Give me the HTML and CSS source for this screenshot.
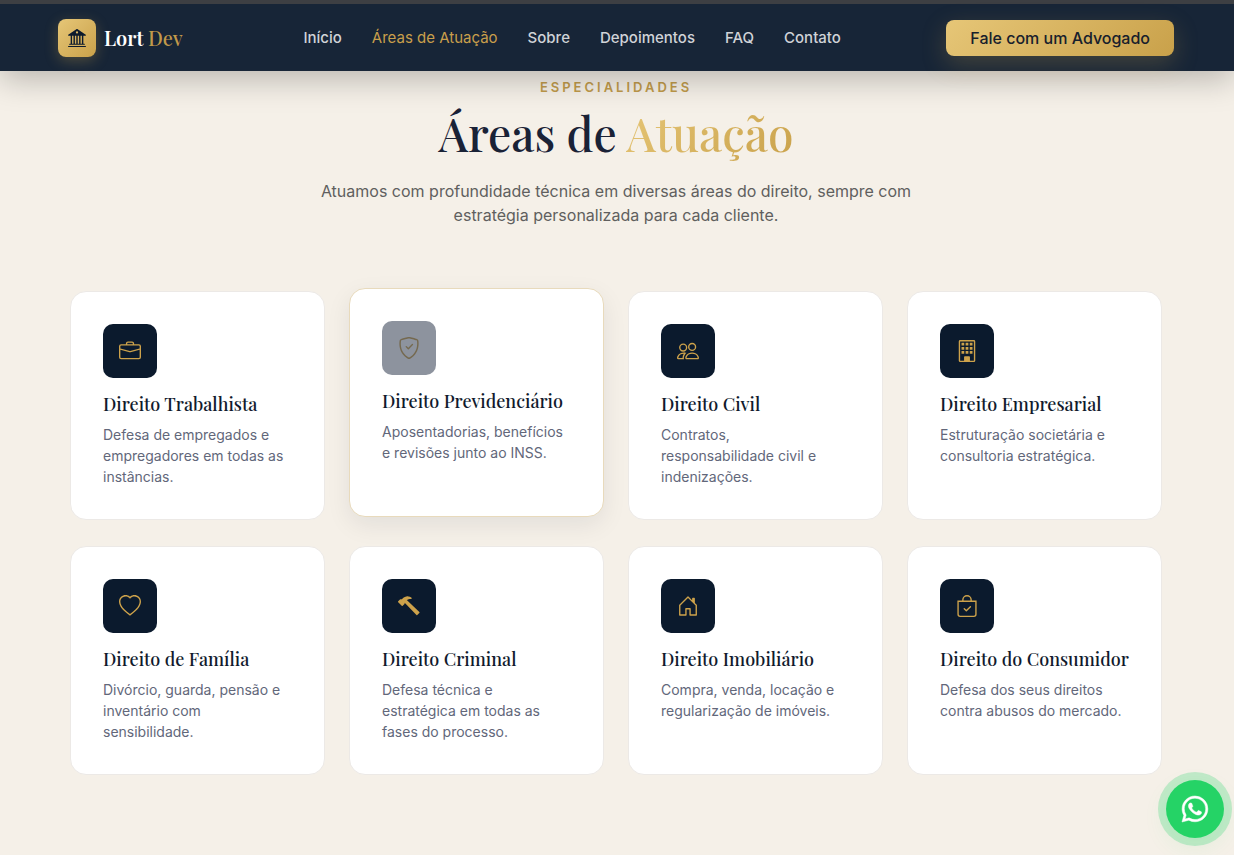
FILE: index.html
```html
<!DOCTYPE html>
<html lang="pt-BR">
<head>
<meta charset="utf-8">
<meta name="viewport" content="width=device-width, initial-scale=1">
<title>Lort Dev</title>
<link rel="stylesheet" href="styles.css">
</head>
<body>
<header class="header">
  <a class="brand" href="#inicio">
    <span class="brand-mark"><svg viewBox="0 0 16 16" aria-hidden="true"><path d="M8.277.084a.5.5 0 0 0-.554 0l-7.5 5A.5.5 0 0 0 .5 6h1.875v7H1.5a.5.5 0 0 0 0 1h13a.5.5 0 1 0 0-1h-.875V6H15.5a.5.5 0 0 0 .277-.916zM12.375 6v7h-1.25V6zm-2.5 0v7h-1.25V6zm-2.5 0v7h-1.25V6zm-2.5 0v7h-1.25V6zM8 4a1 1 0 1 1 0-2 1 1 0 0 1 0 2M.5 15a.5.5 0 0 0 0 1h15a.5.5 0 1 0 0-1z"/></svg></span>
    <span class="brand-name">Lort <span class="brand-accent">Dev</span></span>
  </a>
  <nav class="nav">
    <a href="#inicio">Início</a>
    <a class="active" href="#areas">Áreas de Atuação</a>
    <a href="#sobre">Sobre</a>
    <a href="#depoimentos">Depoimentos</a>
    <a href="#faq">FAQ</a>
    <a href="#contato">Contato</a>
  </nav>
  <a class="cta" href="#contato">Fale com um Advogado</a>
</header>
<main class="section" id="areas">
  <div class="intro">
    <p class="eyebrow">ESPECIALIDADES</p>
    <h2 class="heading">Áreas de <span class="gold-text">Atuação</span></h2>
    <p class="lead">Atuamos com profundidade técnica em diversas áreas do direito, sempre com estratégia personalizada para cada cliente.</p>
  </div>
  <div class="grid">
    <article class="card">
      <div class="icon"><svg viewBox="0 0 16 16" aria-hidden="true"><path d="M6.500 1A1.500 1.500 0 0 0 5 2.500V3H1.500A1.500 1.500 0 0 0 0 4.500v8A1.500 1.500 0 0 0 1.500 14h13a1.500 1.500 0 0 0 1.500-1.500v-8A1.500 1.500 0 0 0 14.500 3H11v-.5A1.500 1.500 0 0 0 9.500 1zm0 1h3a.5.5 0 0 1 .5.5V3H6v-.5a.5.5 0 0 1 .5-.5m1.886 6.914L15 7.151V12.500a.5.5 0 0 1-.5.5h-13a.5.5 0 0 1-.5-.5V7.150l6.614 1.764a1.500 1.500 0 0 0 .772 0M1.500 4h13a.5.5 0 0 1 .5.5v1.616L8.129 7.948a.5.5 0 0 1-.258 0L1 6.116V4.500a.5.5 0 0 1 .5-.5"/></svg></div>
      <h3>Direito Trabalhista</h3>
      <p>Defesa de empregados e empregadores em todas as instâncias.</p>
    </article>
    <article class="card raised">
      <div class="icon"><svg viewBox="0 0 16 16" aria-hidden="true"><path d="M5.338 1.590a61 61 0 0 0-2.837.856.48.48 0 0 0-.328.39c-.554 4.157.726 7.190 2.253 9.188a10.700 10.700 0 0 0 2.287 2.233c.346.244.652.42.893.533q.18.085.293.118a1 1 0 0 0 .101.025 1 1 0 0 0 .1-.025q.114-.034.294-.118c.24-.113.547-.29.893-.533a10.700 10.700 0 0 0 2.287-2.233c1.527-1.997 2.807-5.031 2.253-9.188a.48.48 0 0 0-.328-.39c-.651-.213-1.750-.56-2.837-.855C9.552 1.290 8.531 1.067 8 1.067c-.53 0-1.552.223-2.662.524zM5.072.56C6.157.265 7.310 0 8 0s1.843.265 2.928.56c1.110.3 2.229.655 2.887.87a1.540 1.540 0 0 1 1.044 1.262c.596 4.477-.787 7.795-2.465 9.990a11.800 11.800 0 0 1-2.517 2.453 7 7 0 0 1-1.048.625c-.28.132-.581.24-.829.24s-.548-.108-.829-.24a7 7 0 0 1-1.048-.625 11.800 11.800 0 0 1-2.517-2.453C1.928 10.487.545 7.169 1.141 2.692A1.540 1.540 0 0 1 2.185 1.430 63 63 0 0 1 5.072.56"/><path d="M10.854 5.146a.5.5 0 0 1 0 .708l-3 3a.5.5 0 0 1-.708 0l-1.500-1.500a.5.5 0 1 1 .708-.708L7.500 7.793l2.646-2.647a.5.5 0 0 1 .708 0"/></svg></div>
      <h3>Direito Previdenciário</h3>
      <p>Aposentadorias, benefícios e revisões junto ao INSS.</p>
    </article>
    <article class="card">
      <div class="icon"><svg viewBox="0 0 16 16" aria-hidden="true"><path d="M15 14s1 0 1-1-1-4-5-4-5 3-5 4 1 1 1 1zm-7.978-1L7 12.996c.001-.264.167-1.030.76-1.720C8.312 10.629 9.282 10 11 10c1.717 0 2.687.63 3.240 1.276.593.69.758 1.457.76 1.720l-.008.002-.014.002zM11 7a2 2 0 1 0 0-4 2 2 0 0 0 0 4m3-2a3 3 0 1 1-6 0 3 3 0 0 1 6 0M6.936 9.280a6 6 0 0 0-1.230-.247A7 7 0 0 0 5 9c-4 0-5 3-5 4q0 1 1 1h4.216A2.240 2.240 0 0 1 5 13c0-1.010.377-2.042 1.090-2.904.243-.294.526-.569.846-.816M4.920 10A5.500 5.500 0 0 0 4 13H1c0-.26.164-1.030.76-1.724.545-.636 1.492-1.256 3.160-1.275ZM1.500 5.500a3 3 0 1 1 6 0 3 3 0 0 1-6 0m3-2a2 2 0 1 0 0 4 2 2 0 0 0 0-4"/></svg></div>
      <h3>Direito Civil</h3>
      <p>Contratos, responsabilidade civil e indenizações.</p>
    </article>
    <article class="card">
      <div class="icon"><svg viewBox="0 0 16 16" aria-hidden="true"><path d="M2 1a1 1 0 0 1 1-1h10a1 1 0 0 1 1 1v14a1 1 0 0 1-1 1H3a1 1 0 0 1-1-1zm11 0H3v14h3v-2.500a.5.5 0 0 1 .5-.5h3a.5.5 0 0 1 .5.5V15h3z"/><path d="M4 2h2v2H4zM7 2h2v2H7zM10 2h2v2h-2zM4 5h2v2H4zM7 5h2v2H7zM10 5h2v2h-2zM4 8h2v2H4zM7 8h2v2H7zM10 8h2v2h-2zM6 12h4v4H6z"/></svg></div>
      <h3>Direito Empresarial</h3>
      <p>Estruturação societária e consultoria estratégica.</p>
    </article>
    <article class="card">
      <div class="icon"><svg viewBox="0 0 16 16" aria-hidden="true"><path d="m8 2.748-.717-.737C5.600.281 2.514.878 1.400 3.053c-.523 1.023-.641 2.500.314 4.385.92 1.815 2.834 3.989 6.286 6.357 3.452-2.368 5.365-4.542 6.286-6.357.955-1.886.838-3.362.314-4.385C13.486.878 10.400.28 8.717 2.010zM8 15C-7.333 4.868 3.279-3.040 7.824 1.143q.09.083.176.171a3 3 0 0 1 .176-.17C12.720-3.042 23.333 4.867 8 15"/></svg></div>
      <h3>Direito de Família</h3>
      <p>Divórcio, guarda, pensão e inventário com sensibilidade.</p>
    </article>
    <article class="card">
      <div class="icon"><svg viewBox="0 0 16 16" aria-hidden="true"><path d="M9.972 2.508a.5.5 0 0 0-.16-.556l-.178-.129a5 5 0 0 0-2.076-.783C6.215.862 4.504 1.229 2.840 3.133H1.786a.5.5 0 0 0-.354.147L.146 4.567a.5.5 0 0 0 0 .706l2.571 2.579a.5.5 0 0 0 .708 0l1.286-1.290a.5.5 0 0 0 .146-.353V5.570l8.387 8.873A.5.5 0 0 0 14 14.500l1.500-1.500a.5.5 0 0 0 .017-.689l-9.129-8.630c.747-.456 1.772-.839 3.112-.839a.5.5 0 0 0 .472-.334"/></svg></div>
      <h3>Direito Criminal</h3>
      <p>Defesa técnica e estratégica em todas as fases do processo.</p>
    </article>
    <article class="card">
      <div class="icon"><svg viewBox="0 0 16 16" aria-hidden="true"><path d="M8.354 1.146a.5.5 0 0 0-.708 0l-6 6A.5.5 0 0 0 1.500 7.500v7a.5.5 0 0 0 .5.5h4.500a.5.5 0 0 0 .5-.5v-4h2v4a.5.5 0 0 0 .5.5H14a.5.5 0 0 0 .5-.5v-7a.5.5 0 0 0-.146-.354L13 5.793V2.500a.5.5 0 0 0-.5-.5h-1a.5.5 0 0 0-.5.5v1.293zM2.500 14V7.707l5.500-5.500 5.500 5.500V14H10v-4a.5.5 0 0 0-.5-.5h-3a.5.5 0 0 0-.5.5v4z"/></svg></div>
      <h3>Direito Imobiliário</h3>
      <p>Compra, venda, locação e regularização de imóveis.</p>
    </article>
    <article class="card">
      <div class="icon"><svg viewBox="0 0 16 16" aria-hidden="true"><path d="M10.854 8.146a.5.5 0 0 1 0 .708l-3 3a.5.5 0 0 1-.708 0l-1.500-1.500a.5.5 0 0 1 .708-.708L7.500 10.793l2.646-2.647a.5.5 0 0 1 .708 0"/><path d="M8 1a2.500 2.500 0 0 1 2.500 2.500V4h-5v-.5A2.500 2.500 0 0 1 8 1m3.500 3v-.5a3.500 3.500 0 1 0-7 0V4H1v10a2 2 0 0 0 2 2h10a2 2 0 0 0 2-2V4zM2 5h12v9a1 1 0 0 1-1 1H3a1 1 0 0 1-1-1z"/></svg></div>
      <h3>Direito do Consumidor</h3>
      <p>Defesa dos seus direitos contra abusos do mercado.</p>
    </article>
  </div>
</main>
<a class="whatsapp" href="#whatsapp" aria-label="WhatsApp"><svg viewBox="0 0 16 16" aria-hidden="true"><path d="M13.601 2.326A7.850 7.850 0 0 0 7.994 0C3.627 0 .068 3.558.064 7.926c0 1.399.366 2.760 1.057 3.965L0 16l4.204-1.102a7.900 7.900 0 0 0 3.790.965h.004c4.368 0 7.926-3.558 7.930-7.930A7.900 7.900 0 0 0 13.600 2.326zM7.994 14.521a6.600 6.600 0 0 1-3.356-.92l-.24-.144-2.494.654.666-2.433-.156-.251a6.560 6.560 0 0 1-1.007-3.505c0-3.626 2.957-6.584 6.591-6.584a6.560 6.560 0 0 1 4.660 1.931 6.560 6.560 0 0 1 1.928 4.660c-.004 3.639-2.961 6.592-6.592 6.592m3.615-4.934c-.197-.099-1.170-.578-1.353-.646-.182-.065-.315-.099-.445.099-.133.197-.513.646-.627.775-.114.133-.232.148-.43.05-.197-.1-.836-.308-1.592-.985-.59-.525-.985-1.175-1.103-1.372-.114-.198-.011-.304.088-.403.087-.088.197-.232.296-.346.1-.114.133-.198.198-.33.065-.134.034-.248-.015-.347-.05-.099-.445-1.076-.612-1.470-.16-.389-.323-.335-.445-.34-.114-.007-.247-.007-.38-.007a.73.73 0 0 0-.529.247c-.182.198-.691.677-.691 1.654s.71 1.916.81 2.049c.098.133 1.394 2.132 3.383 2.992.47.205.84.326 1.129.418.475.152.904.129 1.246.08.38-.058 1.171-.48 1.338-.943.164-.464.164-.86.114-.943-.049-.084-.182-.133-.38-.232"/></svg></a>
</body>
</html>
```

FILE: styles.css
```css
:root {
  --navy: #0b1a2d;
  --gold: #cda24b;
  --gold-gradient: linear-gradient(135deg, #e6c677, #c9a14a);
  --serif: "Playfair Display", "Liberation Serif", serif;
  --sans: Inter, "Liberation Sans", sans-serif;
}

* { box-sizing: border-box; }

body {
  margin: 0;
  min-height: 100vh;
  background: #f5f0e8;
  font-family: var(--sans);
  color: #1a2236;
}

a { text-decoration: none; }
h2, h3, p { margin: 0; }
svg { display: block; fill: currentColor; }

.header {
  position: sticky;
  top: 0;
  z-index: 10;
  display: flex;
  align-items: center;
  justify-content: space-between;
  height: 71px;
  padding: 0 60px 0 58px;
  border-top: 4px solid #3d3f43;
  background: #172537;
  box-shadow: 0 8px 32px rgba(0, 0, 0, .25);
}

.brand {
  display: flex;
  align-items: center;
  gap: 8px;
  min-width: 140px;
}

.brand-mark {
  display: grid;
  place-items: center;
  width: 38px;
  height: 38px;
  border-radius: 8px;
  background: var(--gold-gradient);
  color: var(--navy);
  box-shadow: 0 4px 14px rgba(201, 161, 74, .3);
}

.brand-mark svg { width: 18px; height: 18px; }

.brand-name {
  font-family: var(--serif);
  font-size: 20px;
  font-weight: 600;
  line-height: 28px;
  color: #fff;
}

.brand-accent { color: #c2994a; font-weight: 500; }

.nav { display: flex; gap: 30px; }

.nav a {
  font-size: 15px;
  font-weight: 500;
  line-height: 24px;
  color: #d0d3d7;
}

.nav .active { color: #c99f4b; font-weight: 400; }

.cta {
  padding: 6px 24px;
  border-radius: 8px;
  background: var(--gold-gradient);
  box-shadow: 0 8px 24px rgba(201, 161, 74, .25);
  font-size: 16px;
  font-weight: 500;
  line-height: 24px;
  color: #17202c;
}

.section { padding: 6px 72px 80px 70px; }

.intro {
  max-width: 640px;
  margin: 0 auto 64px;
  text-align: center;
}

.eyebrow {
  font-size: 13px;
  font-weight: 600;
  line-height: 20px;
  letter-spacing: 3px;
  color: #c19b4b;
}

.heading {
  margin: 4px 0 14px;
  font-family: var(--serif);
  font-size: 46px;
  font-weight: 500;
  line-height: 64px;
}

.gold-text {
  background: var(--gold-gradient);
  background-clip: text;
  -webkit-background-clip: text;
  color: transparent;
}

.lead {
  font-size: 16px;
  line-height: 24px;
  color: #605f5e;
}

.grid {
  display: grid;
  grid-template-columns: repeat(4, 1fr);
  gap: 26px 24px;
}

.card {
  padding: 32px;
  border: 1px solid #ece9e6;
  border-radius: 16px;
  background: #fff;
}

.raised {
  border-color: #e8dabc;
  box-shadow: 0 8px 24px rgba(11, 26, 45, .08);
  transform: translateY(-3px);
}

.icon {
  display: grid;
  place-items: center;
  width: 54px;
  height: 54px;
  margin-bottom: 15px;
  border-radius: 10px;
  background: var(--navy);
  color: var(--gold);
}

.icon svg { width: 22px; height: 22px; }

.raised .icon { background: #8d939e; color: #75694f; }

.card h3 {
  margin-bottom: 8px;
  font-family: var(--serif);
  font-size: 18px;
  font-weight: 500;
  line-height: 23px;
  white-space: nowrap;
  color: #111a2d;
}

.card p {
  padding-right: 4px;
  font-size: 14px;
  line-height: 21px;
  color: #62677a;
}

.whatsapp {
  position: fixed;
  right: 10px;
  bottom: 17px;
  z-index: 20;
  display: grid;
  place-items: center;
  width: 58px;
  height: 58px;
  border-radius: 50%;
  background: #25d366;
  color: #fff;
  box-shadow: 0 0 0 8px rgba(37, 211, 102, .25), 0 8px 24px rgba(37, 211, 102, .1);
}

.whatsapp svg {
  width: 26px;
  height: 26px;
  overflow: visible;
  stroke: currentColor;
  stroke-width: .3;
}

@media (max-width: 1000px) {
  .header { height: auto; flex-wrap: wrap; gap: 16px; padding: 16px 24px; }
  .nav { flex-wrap: wrap; gap: 16px; }
  .section { padding: 24px; }
  .grid { grid-template-columns: repeat(2, 1fr); }
}

@media (max-width: 560px) {
  .grid { grid-template-columns: 1fr; }
}
```
